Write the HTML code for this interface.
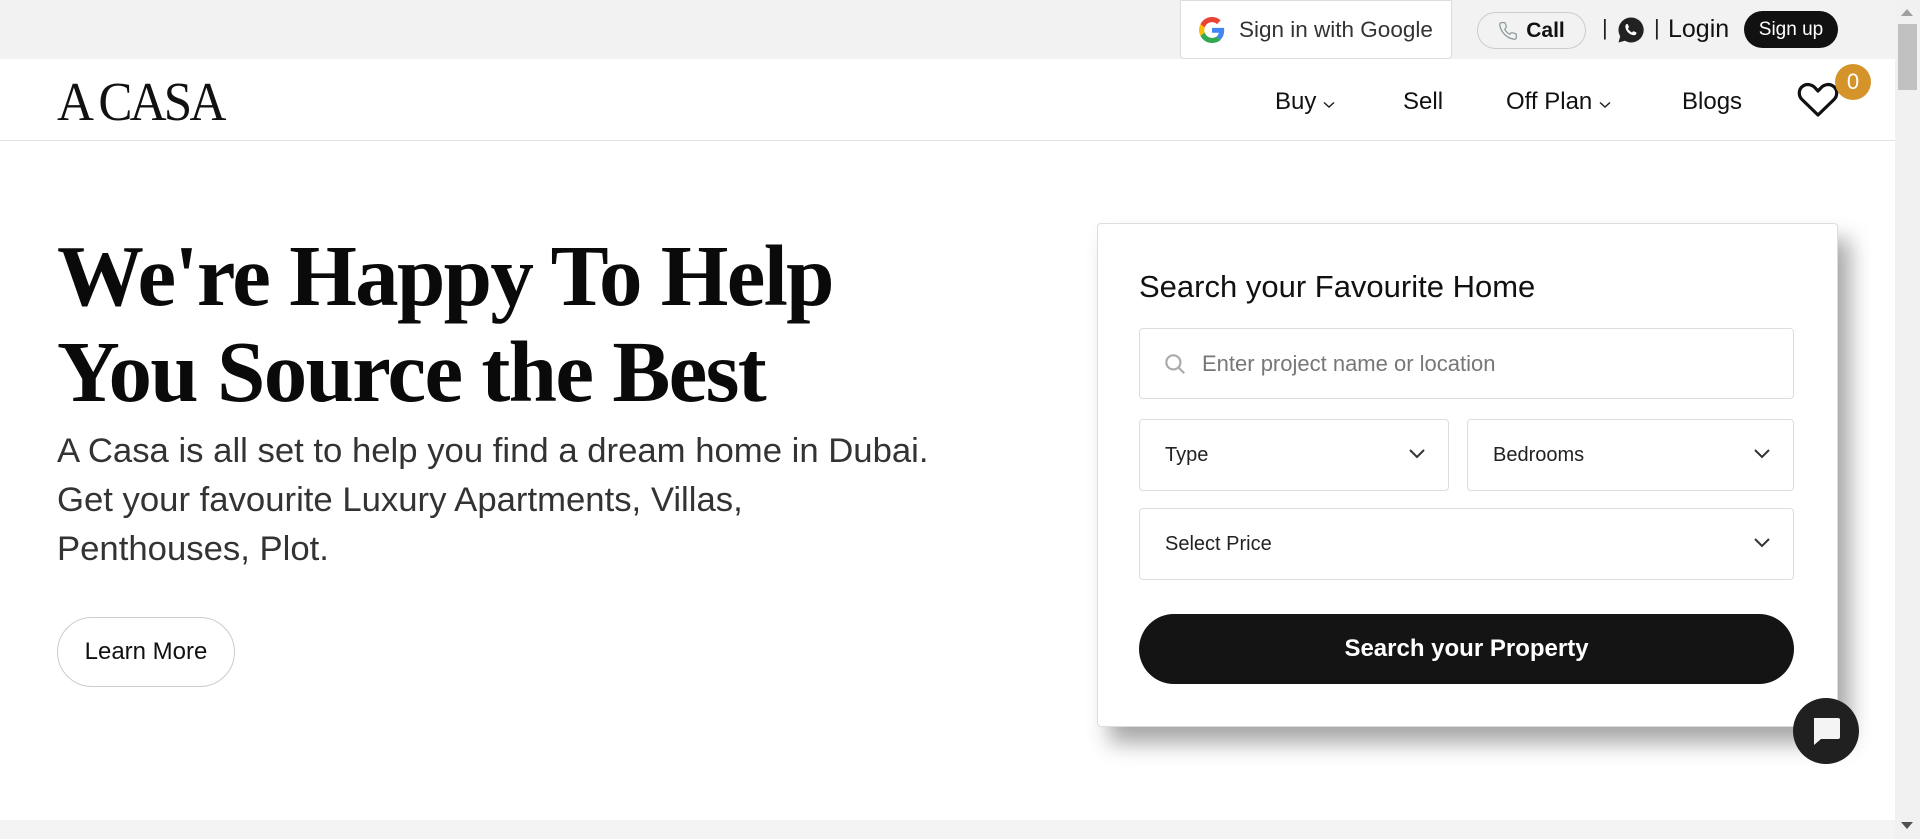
<!DOCTYPE html>
<html><head><meta charset="utf-8"><style>
*{margin:0;padding:0;box-sizing:border-box}
body{width:1920px;height:839px;overflow:hidden;background:#fff;font-family:"Liberation Sans",sans-serif;color:#111;position:relative}
.abs{position:absolute}
.topbar{left:0;top:0;width:1895px;height:59px;background:#f2f2f2}
.g{left:1180px;top:0;width:272px;height:59px;background:#fff;border:1px solid #ddd;border-radius:0 0 4px 4px;display:flex;align-items:center;padding-left:18px;font-size:22.5px;color:#333}
.call{left:1477px;top:12px;width:109px;height:37px;border:1px solid #ccc;border-radius:20px;display:flex;align-items:center;justify-content:center;gap:8px;font-size:21px;font-weight:bold;color:#111}
.sep{font-size:22px;color:#222;top:15px}
.login{left:1668px;top:15px;font-size:25px;color:#111}
.signup{left:1744px;top:11px;width:94px;height:37px;background:#111;color:#fff;border-radius:19px;font-size:19px;display:flex;align-items:center;justify-content:center}
.header{left:0;top:59px;width:1895px;height:82px;border-bottom:1px solid #e2e2e2;background:#fff}
.logo{left:57px;top:70px;font-family:"Liberation Serif",serif;font-size:55px;letter-spacing:-3px;transform:scaleX(.93);transform-origin:left;color:#111}
.nav{top:88px;font-size:24px;color:#111}
.badge{left:1835px;top:64px;width:36px;height:36px;border-radius:50%;background:#d4942a;color:#fff;font-size:22px;display:flex;align-items:center;justify-content:center}
h1{position:absolute;left:57px;top:228px;font-family:"Liberation Serif",serif;font-weight:bold;font-size:87px;line-height:96px;letter-spacing:-1.7px;color:#0a0a0a}
.p{left:57px;top:427px;font-size:34.7px;line-height:49px;color:#333;width:1000px}
.learn{left:57px;top:617px;width:178px;height:70px;border:1px solid #ccc;border-radius:35px;display:flex;align-items:center;justify-content:center;font-size:24px;color:#111}
.card{left:1097px;top:223px;width:741px;height:504px;background:#fff;border:1px solid #ddd;border-radius:4px;box-shadow:12px 16px 22px rgba(0,0,0,.35)}
.ct{left:1139px;top:269px;font-size:31px;color:#111}
.box{border:1px solid #ddd;border-radius:4px;display:flex;align-items:center;font-size:20px;color:#222}
.chev{position:absolute;right:22px;top:50%;margin-top:-7px}
.btn{left:1139px;top:614px;width:655px;height:70px;background:#141414;border-radius:35px;color:#fff;font-weight:bold;font-size:24px;display:flex;align-items:center;justify-content:center}
.chat{left:1793px;top:698px;width:66px;height:66px;border-radius:50%;background:#202020;display:flex;align-items:center;justify-content:center}
.band{left:0;top:820px;width:1895px;height:19px;background:#f4f4f4}
.sb{left:1895px;top:0;width:25px;height:839px;background:#f1f1f1}
.thumb{left:1898px;top:24px;width:19px;height:66px;background:#c1c1c1}
</style></head><body>
<div class="abs topbar"></div>
<div class="abs g"><svg width="26" height="26" viewBox="0 0 48 48"><path fill="#EA4335" d="M24 9.5c3.5 0 6.6 1.2 9.1 3.6l6.8-6.8C35.8 2.4 30.3 0 24 0 14.6 0 6.6 5.4 2.7 13.3l7.9 6.1C12.5 13.6 17.8 9.5 24 9.5z"/><path fill="#4285F4" d="M46.5 24.5c0-1.6-.1-3.1-.4-4.5H24v9h12.7c-.6 3-2.2 5.5-4.7 7.2l7.6 5.9c4.4-4.1 6.9-10.1 6.9-17.6z"/><path fill="#FBBC05" d="M10.5 28.6c-.5-1.5-.8-3-.8-4.6s.3-3.1.8-4.6l-7.9-6.1C1 16.5 0 20.1 0 24s1 7.5 2.7 10.7l7.8-6.1z"/><path fill="#34A853" d="M24 48c6.5 0 11.9-2.1 15.9-5.8l-7.6-5.9c-2.1 1.4-4.9 2.3-8.3 2.3-6.2 0-11.5-4.1-13.4-9.9l-7.9 6.1C6.6 42.6 14.6 48 24 48z"/></svg><span style="margin-left:14px">Sign in with Google</span></div>
<div class="abs call"><svg width="20" height="20" viewBox="0 0 24 24" fill="none" stroke="#8a9a9a" stroke-width="1.5"><path d="M22 16.9v3a2 2 0 0 1-2.2 2 19.8 19.8 0 0 1-8.6-3.1 19.5 19.5 0 0 1-6-6A19.8 19.8 0 0 1 2.1 4.2 2 2 0 0 1 4.1 2h3a2 2 0 0 1 2 1.7c.1 1 .4 1.9.7 2.8a2 2 0 0 1-.5 2.1L8 9.9a16 16 0 0 0 6 6l1.3-1.3a2 2 0 0 1 2.1-.4c.9.3 1.8.6 2.8.7a2 2 0 0 1 1.7 2z"/></svg>Call</div>
<div class="abs sep" style="left:1602px">|</div>
<svg class="abs" style="left:1617px;top:16px" width="28" height="28" viewBox="0 0 28 28"><path d="M14 1.5a12.5 12.5 0 0 0-10.8 18.8L1.5 26.5l6.4-1.7A12.5 12.5 0 1 0 14 1.5z" fill="#222"/><path d="M10 8c.4 0 .7 0 .9.5l1 2.3c.1.3 0 .6-.2.8l-.8.9c.9 1.7 2.3 3.1 4.1 4l.9-1c.2-.2.5-.3.8-.2l2.3 1c.4.2.5.5.4.9-.3 1.3-1.4 2.1-2.7 2-4.3-.4-8-4-8.3-8.3C8.3 9.3 9 8 10 8z" fill="#fff"/></svg>
<div class="abs sep" style="left:1654px">|</div>
<div class="abs login">Login</div>
<div class="abs signup">Sign up</div>
<div class="abs header"></div>
<div class="abs logo">A CASA</div>
<div class="abs nav" style="left:1275px">Buy <svg width="12" height="8" viewBox="0 0 12 8"><path d="M1 1.5l5 4.5 5-4.5" fill="none" stroke="#222" stroke-width="1.5"/></svg></div>
<div class="abs nav" style="left:1403px">Sell</div>
<div class="abs nav" style="left:1506px">Off Plan <svg width="12" height="8" viewBox="0 0 12 8"><path d="M1 1.5l5 4.5 5-4.5" fill="none" stroke="#222" stroke-width="1.5"/></svg></div>
<div class="abs nav" style="left:1682px">Blogs</div>
<svg class="abs" style="left:1797px;top:82px" width="42" height="36" viewBox="0 0 42 36"><path d="M21 33L5 17.5C1 13.5 1.5 7 6 4c4-2.6 9-1.5 11.8 1.6L21 9l3.2-3.4C27 2.5 32 1.4 36 4c4.5 3 5 9.5 1 13.5z" fill="none" stroke="#111" stroke-width="3.2" stroke-linejoin="round"/></svg>
<div class="abs badge">0</div>
<h1>We're Happy To Help<br>You Source the Best</h1>
<div class="abs p">A Casa is all set to help you find a dream home in Dubai.<br>Get your favourite Luxury Apartments, Villas,<br>Penthouses, Plot.</div>
<div class="abs learn">Learn More</div>
<div class="abs card"></div>
<div class="abs ct">Search your Favourite Home</div>
<div class="abs box" style="left:1139px;top:328px;width:655px;height:71px;padding-left:22px;color:#777;font-size:22px"><svg width="26" height="26" viewBox="0 0 24 24" fill="none" stroke="#aaa" stroke-width="2"><circle cx="10.5" cy="10.5" r="6.5"/><path d="M15.5 15.5l5 5"/></svg><span style="margin-left:14px">Enter project name or location</span></div>
<div class="abs box" style="left:1139px;top:419px;width:310px;height:72px;padding-left:25px">Type<svg class="chev" width="18" height="12" viewBox="0 0 18 12"><path d="M2 2l7 7 7-7" fill="none" stroke="#333" stroke-width="2"/></svg></div>
<div class="abs box" style="left:1467px;top:419px;width:327px;height:72px;padding-left:25px">Bedrooms<svg class="chev" width="18" height="12" viewBox="0 0 18 12"><path d="M2 2l7 7 7-7" fill="none" stroke="#333" stroke-width="2"/></svg></div>
<div class="abs box" style="left:1139px;top:508px;width:655px;height:72px;padding-left:25px">Select Price<svg class="chev" width="18" height="12" viewBox="0 0 18 12"><path d="M2 2l7 7 7-7" fill="none" stroke="#333" stroke-width="2"/></svg></div>
<div class="abs btn">Search your Property</div>
<div class="abs chat"><svg width="34" height="34" viewBox="0 0 34 34"><path d="M5 4h24a2 2 0 0 1 2 2v17a2 2 0 0 1-2 2H12l-7 6z" fill="#f4f4f4"/></svg></div>
<div class="abs band"></div>
<div class="abs sb"></div>
<div class="abs thumb"></div>
<svg class="abs" style="left:1901px;top:8px" width="12" height="8"><path d="M0 8L6 1 12 8z" fill="#a0a0a0"/></svg>
<svg class="abs" style="left:1901px;top:822px" width="12" height="8"><path d="M0 0L6 7 12 0z" fill="#505050"/></svg>
</body></html>
